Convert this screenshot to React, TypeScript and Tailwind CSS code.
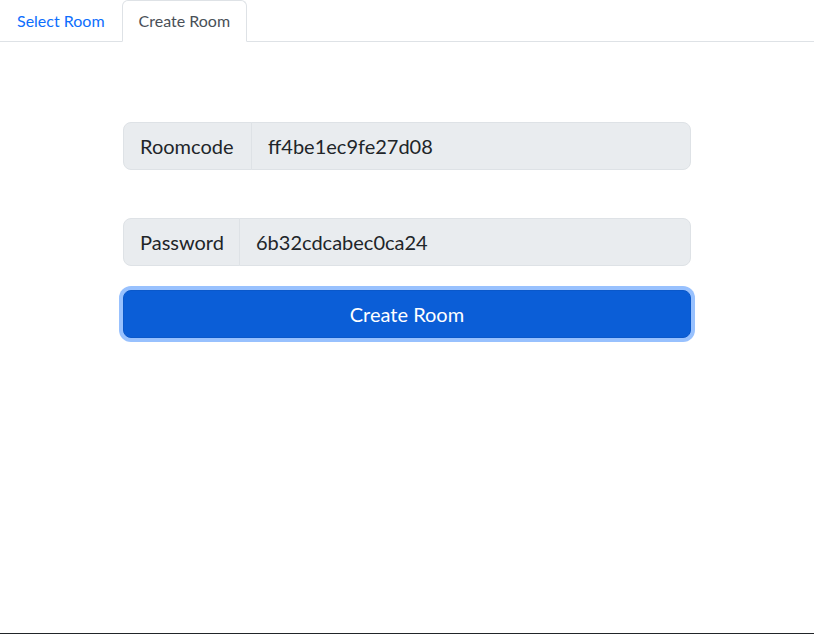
import React from "react";

function Group({ label, value, labelW }: { label: string; value: string; labelW: string }) {
  return (
    <div className="flex h-[48px] text-[20px] leading-[30px] text-[#212529]">
      <span className={`flex items-center px-4 bg-[#e9ecef] border border-[#dee2e6] rounded-l-[8px] whitespace-nowrap shrink-0 ${labelW}`}>
        {label}
      </span>
      <div className="flex-1 flex items-center px-4 bg-[#e9ecef] border border-[#dee2e6] -ml-px rounded-r-[8px] whitespace-nowrap">
        {value}
      </div>
    </div>
  );
}

export default function App() {
  return (
    <div
      className="h-[634px] w-full bg-white border-b border-[#212529] box-border"
      style={{ fontFamily: "Lato, 'Noto Sans', sans-serif" }}
    >
      <div className="flex h-[42px] border-b border-[#dee2e6] text-[16px] leading-6">
        <div className="px-4 py-2 border border-transparent rounded-t-[6px] text-[#0d6efd] whitespace-nowrap">
          Select Room
        </div>
        <div className="px-4 py-2 border border-[#dee2e6] border-b-white bg-white rounded-t-[6px] text-[#495057] whitespace-nowrap h-[42px]">
          Create Room
        </div>
      </div>
      <div className="w-[568px] mx-auto mt-[80px] flex flex-col">
        <Group label="Roomcode" value="ff4be1ec9fe27d08" labelW="w-[129px]" />
        <div className="mt-[48px]">
          <Group label="Password" value="6b32cdcabec0ca24" labelW="w-[117px]" />
        </div>
        <button className="mt-[24px] h-[48px] w-full bg-[#0b5ed7] border border-[#0a58ca] text-white text-[20px] leading-[30px] rounded-[8px] shadow-[0_0_0_4px_rgba(49,132,253,0.5)]">
          Create Room
        </button>
      </div>
    </div>
  );
}
